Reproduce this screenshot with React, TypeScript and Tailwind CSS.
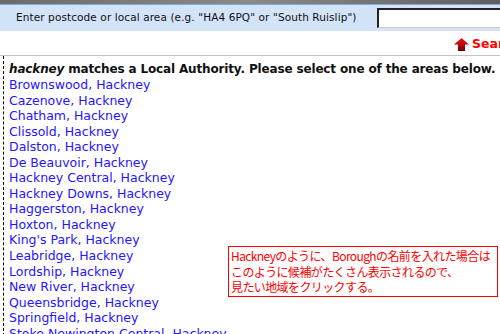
const areas = [
  "Brownswood",
  "Cazenove",
  "Chatham",
  "Clissold",
  "Dalston",
  "De Beauvoir",
  "Hackney Central",
  "Hackney Downs",
  "Haggerston",
  "Hoxton",
  "King's Park",
  "Leabridge",
  "Lordship",
  "New River",
  "Queensbridge",
  "Springfield",
  "Stoke Newington Central",
];

function UpArrow() {
  return (
    <svg width="15" height="13" viewBox="0 0 15 13">
      <defs>
        <linearGradient id="ag" x1="0" y1="0" x2="0" y2="1">
          <stop offset="0" stopColor="#ff1010" />
          <stop offset="1" stopColor="#700000" />
        </linearGradient>
      </defs>
      <path d="M7.5 0 L15 6.5 L11 6.5 L11 13 L4 13 L4 6.5 L0 6.5 Z" fill="url(#ag)" />
    </svg>
  );
}

export default function App() {
  return (
    <div className="relative h-[334px] w-[500px] overflow-hidden bg-white font-['DejaVu_Sans',Verdana,sans-serif]">
      {/* window chrome strip */}
      <div className="h-[4px] bg-gradient-to-r from-[#6b6b6b] via-[#8a8a8a] to-[#5f5f5f]" />
      <div className="h-[1px] bg-[#7fa8dc]" />

      {/* search bar */}
      <div className="flex h-[26px] items-center bg-[#d3e3f8] pl-[16px]">
        <span className="text-[10.5px] tracking-[0.1px] text-[#111]">
          Enter postcode or local area (e.g. "HA4 6PQ" or "South Ruislip")
        </span>
        <div className="ml-auto h-[20px] w-[123px] border-l-2 border-t-2 border-[#222] border-b border-b-[#ccc] bg-white" />
      </div>

      <div className="flex h-[24px] items-center justify-end gap-[3px] pt-[2px]">
        <UpArrow />
        <span className="w-[28px] overflow-hidden whitespace-nowrap text-[12.5px] font-bold text-[#ff0000]">
          Search
        </span>
      </div>
      <div className="h-[1px] bg-[#c3c3c3]" />

      {/* results */}
      <div className="ml-[3px] border-l border-dashed border-black pl-[5px] pt-[5px]">
        <p className="whitespace-nowrap text-[12px] font-bold leading-[16px] tracking-[-0.15px] text-[#111]">
          <i>hackney</i> matches a Local Authority. Please select one of the areas below.
        </p>
        <ul className="text-[12.5px] leading-[15.55px]">
          {areas.map((a) => (
            <li key={a}>
              <a href="#" className="text-[#2414ff]">
                {a}, Hackney
              </a>
            </li>
          ))}
        </ul>
      </div>

      {/* annotation */}
      <div className="absolute left-[228px] top-[246px] w-[270px] border border-[#ff0000] bg-white px-[2px] py-[1px] font-['Noto_Sans_CJK_JP',sans-serif] text-[12px] leading-[15.5px] tracking-[-0.6px] text-[#ff0000]">
        <div className="whitespace-nowrap">Hackneyのように、Boroughの名前を入れた場合は</div>
        <div className="whitespace-nowrap">このように候補がたくさん表示されるので、</div>
        <div className="whitespace-nowrap">見たい地域をクリックする。</div>
      </div>
    </div>
  );
}
